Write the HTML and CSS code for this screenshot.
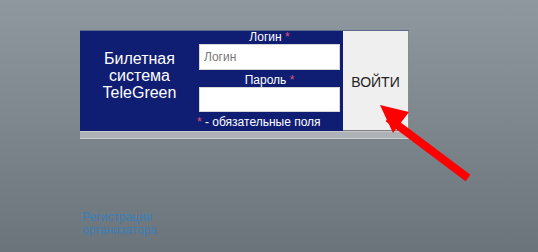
FILE: index.html
```html
<!DOCTYPE html>
<html lang="ru">
  <head>
    <meta charset="UTF-8" />
    <title>Билетная система TeleGreen</title>
    <link rel="stylesheet" href="styles.css">
  </head>
  <body>
    <div class="page">
      <!-- Login box -->
      <div class="login">
        <div class="login-box">
          <div class="brand">Билетная<br />система<br />TeleGreen</div>
          <div class="fields">
            <label class="field-label" for="login">Логин <span class="req">*</span></label>
            <input class="field" id="login" type="text" placeholder="Логин" />
            <label class="field-label" for="pass">Пароль <span class="req">*</span></label>
            <input class="field" id="pass" type="password" />
            <div class="note"><span class="req">*</span> - обязательные поля</div>
          </div>
          <button class="enter">ВОЙТИ</button>
        </div>
        <div class="login-shadow"></div>
      </div>

      <a class="register" href="#">Регистрация организатора</a>

      <!-- Pointer arrow -->
      <svg class="arrow" width="110" height="80" viewBox="0 0 110 80">
        <line x1="104" y1="86" x2="24" y2="26" stroke="#ff0000" stroke-width="8" transform="translate(0,-12)" />
        <polygon points="16,1 45,8 29,29" fill="#ff0000" />
      </svg>
    </div>
  </body>
</html>
```

FILE: styles.css
```css
/* Reset and page background */
html,
body {
  margin: 0;
  padding: 0;
  height: 100%;
  overflow: hidden;
  font-family: Arial, "Liberation Sans", sans-serif;
}

body {
  background: linear-gradient(to bottom, #8f979f 0%, #6b737b 100%);
}

.page {
  position: relative;
  height: 100%;
  padding: 30px 0 0 80px;
  box-sizing: border-box;
}

/* Login box */
.login {
  width: 329px;
}

.login-box {
  display: flex;
  height: 100px;
  border-top: 1px solid #5d6a8e;
}

.brand {
  width: 119px;
  background: #0f1e73;
  color: white;
  font-size: 16px;
  line-height: 17px;
  text-align: center;
  padding-top: 19px;
  box-sizing: border-box;
}

.fields {
  width: 144px;
  background: #0f1e73;
  display: flex;
  flex-direction: column;
  align-items: center;
  padding-right: 3px;
  box-sizing: border-box;
}

.field-label {
  color: white;
  font-size: 12px;
  line-height: 13px;
  text-align: center;
}

.fields .field-label + .field + .field-label {
  margin-top: 3px;
  line-height: 14px;
}

.field {
  width: 141px;
  height: 26px;
  margin: 0;
  padding: 0 4px;
  box-sizing: border-box;
  border: 1px solid #d6d6d6;
  background: white;
  font-family: inherit;
  font-size: 12px;
  color: #333;
  outline: none;
}

#pass {
  height: 25px;
}

.field::placeholder {
  color: #777;
}

.req {
  color: #e0507a;
}

.note {
  align-self: flex-start;
  margin: 1px 0 0 -2px;
  color: white;
  font-size: 12px;
  line-height: 18px;
  white-space: nowrap;
}

.enter {
  width: 66px;
  margin: 0;
  padding: 3px 0 0;
  border: none;
  border-right: 1px solid #8b8b8b;
  border-bottom: 1px solid #7f7f7f;
  background: #efefef;
  color: #222;
  font-family: inherit;
  font-size: 14px;
  cursor: pointer;
}

.login-shadow {
  height: 6px;
  border-top: 1px solid #c6c9cd;
  border-bottom: 1px solid #cdd0d3;
  background: #aeb2b6;
}

/* Registration link */
.register {
  display: block;
  width: 80px;
  margin: 72px 0 0 2px;
  font-size: 12px;
  line-height: 13px;
  color: #3b80b8;
  text-decoration: none;
}

/* Arrow overlay */
.arrow {
  position: absolute;
  left: 364px;
  top: 104px;
}
```
